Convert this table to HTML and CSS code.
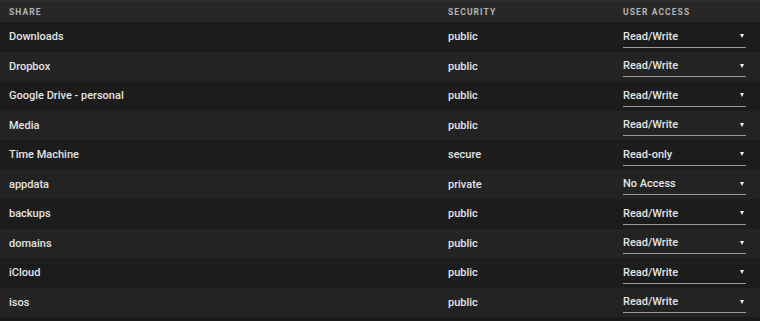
FILE: index.html
```html
<!DOCTYPE html>
<html lang="en">
<head>
    <meta charset="UTF-8">
    <title>Shares</title>
    <link rel="stylesheet" href="styles.css">
</head>
<body>
    <div class="shares">
        <div class="row head">
            <div class="col-share">Share</div>
            <div class="col-sec">Security</div>
            <div class="col-access">User Access</div>
        </div>
        <div class="row"><div class="col-share">Downloads</div><div class="col-sec">public</div><div class="col-access"><div class="select">Read/Write<span class="caret"></span></div></div></div>
        <div class="row"><div class="col-share">Dropbox</div><div class="col-sec">public</div><div class="col-access"><div class="select">Read/Write<span class="caret"></span></div></div></div>
        <div class="row"><div class="col-share">Google Drive - personal</div><div class="col-sec">public</div><div class="col-access"><div class="select">Read/Write<span class="caret"></span></div></div></div>
        <div class="row"><div class="col-share">Media</div><div class="col-sec">public</div><div class="col-access"><div class="select">Read/Write<span class="caret"></span></div></div></div>
        <div class="row"><div class="col-share">Time Machine</div><div class="col-sec">secure</div><div class="col-access"><div class="select">Read-only<span class="caret"></span></div></div></div>
        <div class="row"><div class="col-share">appdata</div><div class="col-sec">private</div><div class="col-access"><div class="select">No Access<span class="caret"></span></div></div></div>
        <div class="row"><div class="col-share">backups</div><div class="col-sec">public</div><div class="col-access"><div class="select">Read/Write<span class="caret"></span></div></div></div>
        <div class="row"><div class="col-share">domains</div><div class="col-sec">public</div><div class="col-access"><div class="select">Read/Write<span class="caret"></span></div></div></div>
        <div class="row"><div class="col-share">iCloud</div><div class="col-sec">public</div><div class="col-access"><div class="select">Read/Write<span class="caret"></span></div></div></div>
        <div class="row"><div class="col-share">isos</div><div class="col-sec">public</div><div class="col-access"><div class="select">Read/Write<span class="caret"></span></div></div></div>
    </div>
</body>
</html>
```

FILE: styles.css
```css
body {
    margin: 0;
    background: #1a1a1a;
    font-family: Roboto, "Liberation Sans", Arial, sans-serif;
    color: #e4e4e4;
}
.shares {
    display: flex;
    flex-direction: column;
}
.row {
    display: grid;
    grid-template-columns: 448px 175px 123px;
    align-items: center;
    height: 29.5px;
    font-size: 11px;
    font-weight: 500;
}
.row:nth-child(even) {
    background: #1c1c1c;
}
.row:nth-child(odd) {
    background: #232323;
}
.row.head {
    height: 22px;
    background: #272727;
    border-top: 1px solid #2e2e2e;
    box-sizing: border-box;
    font-size: 8.5px;
    font-weight: 700;
    letter-spacing: 1.1px;
    text-transform: uppercase;
    color: #b4b4b4;
}
.col-share {
    padding-left: 9px;
}
.select {
    display: flex;
    align-items: center;
    justify-content: space-between;
    height: 22px;
    box-sizing: border-box;
    padding-right: 2px;
    border-bottom: 1px solid #9a9a9a;
}
.caret {
    width: 0;
    height: 0;
    border-left: 2.5px solid transparent;
    border-right: 2.5px solid transparent;
    border-top: 4px solid #f0f0f0;
}
```
